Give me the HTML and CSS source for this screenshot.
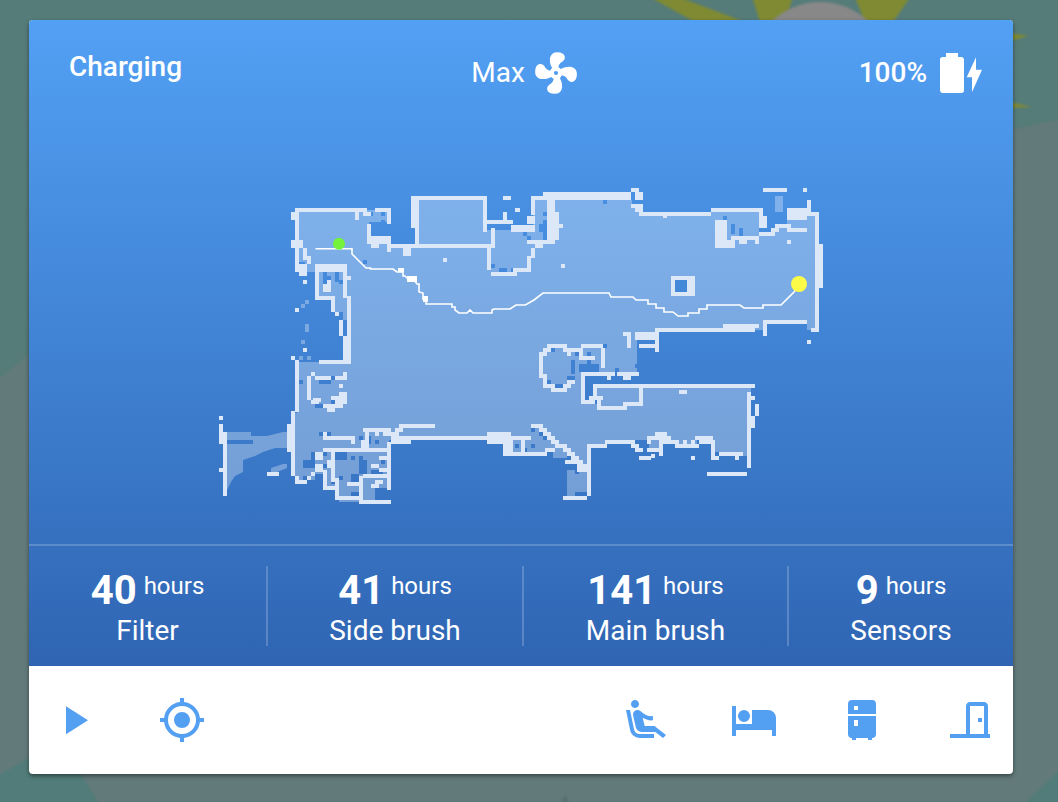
FILE: index.html
```html
<!DOCTYPE html>
<html lang="en">
<head>
<meta charset="utf-8">
<title>Vacuum</title>
<link rel="stylesheet" href="styles.css">
</head>
<body>
<svg class="wallpaper" viewBox="0 0 1058 802" aria-hidden="true">
  <path class="wp-gray" d="M-10,386L60,330L1020,128L1068,118V812H-10Z"/>
  <path class="wp-teal" d="M-10,780L60,740L105,812H-10ZM1068,762V812H1015Z"/>
  <path class="wp-sun" d="M637,-10H660L745,22H695ZM750,-10H795L785,22H760ZM852,-10H915L893,22H865ZM1010,33L1028,36L1010,41ZM1010,102L1032,107L1010,108Z"/>
  <circle class="wp-moon" cx="820" cy="72" r="70"/>
  <path class="wp-dark" d="M565,795L569,802H561Z"/>
</svg>
<main class="card">
  <section class="panel">
    <header class="status">
      <div class="state">Charging</div>
      <div class="fan">
        <span class="status-text">Max</span>
        <svg class="fan-icon" viewBox="0 0 24 24"><path d="M12,11A1,1 0 0,0 11,12A1,1 0 0,0 12,13A1,1 0 0,0 13,12A1,1 0 0,0 12,11M12.5,2C17,2 17.11,5.57 14.75,6.75C13.76,7.24 13.32,8.29 13.13,9.22C13.61,9.42 14.03,9.73 14.35,10.13C18.05,8.13 22.03,8.92 22.03,12.5C22.03,17 18.46,17.1 17.28,14.73C16.78,13.74 15.72,13.3 14.79,13.11C14.59,13.59 14.28,14 13.88,14.34C15.87,18.03 15.08,22 11.5,22C7,22 6.91,18.42 9.27,17.24C10.25,16.75 10.69,15.71 10.89,14.79C10.4,14.59 9.97,14.27 9.65,13.87C5.96,15.85 2,15.07 2,11.5C2,7 5.56,6.89 6.74,9.26C7.24,10.25 8.29,10.68 9.22,10.87C9.41,10.39 9.73,9.97 10.14,9.65C8.15,5.96 8.94,2 12.5,2Z"/></svg>
      </div>
      <div class="battery">
        <span class="status-text">100%</span>
        <svg class="battery-icon" viewBox="0 0 24 24"><path d="M16.67,4H15V2H9V4H7.33A1.33,1.33 0 0,0 6,5.33V20.67C6,21.4 6.6,22 7.33,22H16.67A1.33,1.33 0 0,0 18,20.67V5.33C18,4.6 17.4,4 16.67,4Z"/></svg>
        <svg class="bolt-icon" viewBox="0 0 17 36"><path d="M10,0.3L0.7,20.3H6V35.3L16,12.7H10Z"/></svg>
      </div>
    </header>
    <svg class="map" viewBox="29 100 984 444" role="img" aria-label="Floor map">
      <defs>
        <linearGradient id="mapbg" gradientUnits="userSpaceOnUse" x1="0" y1="20" x2="0" y2="666">
          <stop offset="0" stop-color="#52a0f4"/>
          <stop offset="1" stop-color="#2f65b3"/>
        </linearGradient>
      </defs>
      <path class="floor" d="M297,210H391V222H369V240H391V246H415V198H487V230H529V226H533V200H632V206H641V214H711V210H759V232H775V226H787V216H817V330H807V322H765V330H657V338H637V372H585V404H597V386H751V456H713V440H697V446H677V440H661V436H659V450H649V440H635V442H607V446H589V496H567V470H577V464H569V458H553V452H511V456H505V440H389V488H375V502H339V498H337V488H325V474H315V480H297V476H293V413H297V362H349V320H343V312H333V298H317V272H305V262H297Z
        M227,432H251V436H267L283,432H287V448H275L263,452L255,456L243,460V472L235,476L231,482L227,490Z
        M271,468L283,464H287V468L277,472H271Z
        M775,196H783V212H775Z
        M301,304h4v4h-4zM305,300h4v4h-4zM305,324h4v8h-4zM301,340h4v4h-4zM299,356h4v4h-4zM307,356h4v4h-4z"/>
      <path class="holes" d="M227,442H251
        M321,434h0M329,434h0M361,438h0M369,438V442M377,442h0M337,454H345M337,458H345M353,458h0M361,458h0M361,462V472M365,462V472M373,472H381M353,476V484M357,476V484M341,478h0M333,482h0M353,494H361M383,462h0M377,450h0M325,454h0M325,466h0M305,462H313M305,466H313M313,454V458M305,478h0
        M321,382H329M333,378h0M341,378h0M301,382h0M297,386h0M333,402h0M317,406H321
        M313,274H317M333,270h0M341,270h0M325,274V284M337,274V280M329,278h0M341,282h0
        M493,266h0M501,270H505M513,270h0M365,262h0M383,214h0M371,214h0M383,222h0
        M605,202h0M545,214h0M545,222H549M541,226H545M541,230H545M545,234V238M525,234h0M529,238h0
        M725,218h0M733,226V232M741,230V234
        M577,354h0M589,354V364M573,362V372M581,366H589M581,370H589M593,366H597M593,370H597M605,346h0M617,370V374M637,366h0M553,350h0M549,382h0M557,386H561M569,378H573
        M533,430h0M541,434h0M545,438h0M517,446h0M525,450h0M533,446h0M569,458h0M577,466V472M577,494H585M717,454h0M649,342h0"/>
      <path class="blocks" d="M291,212h4v8h-4zM291,240h12v8h-12zM367,236h20v8h-20zM371,244h8v4h-8zM403,248h8v8h-8zM411,196h8v32h-8zM415,228h4v16h-4zM443,258h4v4h-4z
        M503,196h8v4h-8zM503,212h4v8h-4zM515,208h5v4h-5zM511,225h24v7h-24zM527,216h8v8h-8zM531,196h4v19h-4zM543,192h88v8h-88zM535,196h8v4h-8zM547,200h8v40h-8zM555,212h4v28h-4zM559,224h4v4h-4zM527,240h28v4h-28zM535,244h8v4h-8z
        M631,188h8v4h-8zM635,192h8v8h-8zM631,204h12v4h-12zM635,208h8v4h-8zM663,214h4v4h-4z
        M759,208h4v8h-4zM759,216h8v12h-8zM715,220h12v28h-12zM727,240h8v8h-8zM731,236h28v4h-28zM739,240h8v4h-8zM755,240h4v4h-4zM759,232h16v4h-16zM771,228h8v4h-8zM775,224h16v4h-16zM787,228h20v4h-20zM787,208h20v12h-20zM807,212h12v4h-12zM807,200h4v12h-4zM763,188h24v4h-24zM803,188h4v4h-4zM787,240h4v4h-4zM819,244h4v44h-4zM811,328h8v4h-8zM807,340h4v4h-4z
        M723,324h36v4h-36zM623,332h8v4h-8zM627,336h4v12h-4zM635,332h24v8h-24zM655,328h4v24h-4zM639,344h16v4h-16z
        M671,276h24v20h-24z
        M623,376h8v4h-8zM607,376h4v4h-4zM679,390h8v4h-8zM751,416h4v12h-4zM755,404h4v12h-4zM751,396h4v4h-4zM707,472h40v4h-40zM719,452h24v4h-24zM711,456h8v4h-8zM735,456h4v4h-4zM651,454h4v4h-4zM639,456h12v4h-12zM691,456h4v4h-4zM683,440h4v4h-4zM691,440h4v4h-4z
        M565,460h12v4h-12zM577,464h10v8h-10z
        M391,436h20v8h-20zM487,432h24v12h-24zM503,444h8v12h-8zM395,428h8v4h-8zM365,428h4v12h-4zM361,440h8v8h-8zM383,432h16v4h-16zM375,432h4v4h-4z
        M287,424h8v28h-8zM295,480h12v4h-12zM295,476h4v4h-4zM315,452h8v8h-8zM315,464h8v8h-8zM311,472h4v4h-4zM307,476h4v4h-4zM323,470h4v4h-4zM327,460h4v8h-4z
        M371,464h8v4h-8zM379,468h8v4h-8zM379,456h8v4h-8zM375,480h8v4h-8zM371,484h8v4h-8z
        M219,432h4v12h-4zM219,468h8v4h-8zM223,492h4v4h-4zM219,416h4v4h-4zM219,424h4v8h-4zM267,472h12v4h-12z
        M311,372h4v4h-4zM313,398h8v4h-8zM331,396h16v4h-16zM339,392h8v8h-8zM335,400h12v4h-12zM323,404h20v4h-20zM327,408h8v4h-8zM339,384h4v4h-4zM343,372h4v8h-4z
        M303,280h4v4h-4zM295,308h4v4h-4zM303,348h4v4h-4zM291,356h4v4h-4z
        M347,276h4v4h-4zM343,336h4v24h-4zM335,312h4v4h-4zM323,284h8v8h-8zM327,280h4v4h-4z
        M295,264h12v8h-12zM299,272h8v4h-8zM307,256h4v8h-4zM315,264h32v8h-32z
        M561,264h4v4h-4z"/>
      <rect class="pit" x="675" y="280" width="12" height="12"/>
      <path class="walls" d="M297,210H365M357,214V218M365,214H369M377,210H389V222M369,226V242M389,238V250M389,246H491M413,198H485V230M493,230V246M489,250V268M493,274H515V270H529V258M533,250V256M489,222H511
        M641,214H709M713,210H761M817,214V330M765,322H805M765,322V334M657,330H753M629,338V346M657,330V350
        M569,354V350H565V346H549V350H545V354H541V376H545V386H553V390H565V386H569V382H573M583,346H601M573,350H581M603,350V366M585,358H593M581,354V358
        M583,374H613M619,374H637M583,374V402H593M591,398H601M595,386V398M595,386H753M599,402V408H625V404H641V390M749,394V466
        M713,444V456M697,438H711M701,442H713M677,446H697M665,442H677M665,438H669M657,434H665M661,434V454M649,450H661M649,438H657M649,438V442M637,450H641M633,446H637M607,442H633M589,446H605M589,448V494
        M533,426H541V430H545V434H549V438H553V442H557V446H565V450H569V454H573V458H577V462H581V466H585V470H589M565,498H585
        M511,454H545M547,450H553M511,438H529M511,438V450M523,438V450
        M413,438H485M505,454H520M401,426H433M365,430H389M325,438H353V442M325,434h0M325,450H389M389,444V488
        M293,413V474M297,362V410M333,452V480H337V498H361M361,478V500M361,502H389M349,484H361M365,476H387M325,472V488H337
        M225,434V490
        M309,378V398M313,402H317M317,378H329M337,378H345M313,374h0M341,386h0
        M345,266V296M349,298V362M341,322V334M333,298V310M317,298H333M317,272V298M321,362H349
        M297,210V262M305,250V258"/>
      <path class="route" d="M315.5,248.7H352V254L357,259L362,264L366,268H370.5V269H393L397,272H403V276H405L409,280H414L417,284H419V292L423,293V299H426V304H452V307H455V310L459,313H467L470,310L473,313H492V310L494,309H510L516,305H525L527,304L534,300L543,293H609L611,297H633L636,300H648V304H656V308H664V312H673L678,316H688V313H699V309H707V305H740L744,308H763V305H781L794,292L799,285"/>
      <path class="route-blocks" d="M398,268h6v4h-6zM407,276h10v6h-10zM423,296h5v6h-5z"/>
      <circle class="dock" cx="339" cy="243.7" r="6"/>
      <circle class="robot" cx="799" cy="284" r="8"/>
    </svg>
    <div class="stats">
      <div class="stat"><div class="stat-value"><b>40</b><span>hours</span></div><div class="stat-label">Filter</div></div>
      <div class="stat"><div class="stat-value"><b>41</b><span>hours</span></div><div class="stat-label">Side brush</div></div>
      <div class="stat"><div class="stat-value"><b>141</b><span>hours</span></div><div class="stat-label">Main brush</div></div>
      <div class="stat"><div class="stat-value"><b>9</b><span>hours</span></div><div class="stat-label">Sensors</div></div>
    </div>
  </section>
  <nav class="actions">
    <div class="group">
      <svg class="icon" viewBox="0 0 24 24"><path d="M8,5.14V19.14L19,12.14L8,5.14Z"/></svg>
      <svg class="icon" viewBox="0 0 24 24"><path d="M12,8A4,4 0 0,1 16,12A4,4 0 0,1 12,16A4,4 0 0,1 8,12A4,4 0 0,1 12,8M3.05,13H1V11H3.05C3.5,6.83 6.83,3.5 11,3.05V1H13V3.05C17.17,3.5 20.5,6.83 20.95,11H23V13H20.95C20.5,17.17 17.17,20.5 13,20.95V23H11V20.95C6.83,20.5 3.5,17.17 3.05,13M12,5A7,7 0 0,0 5,12A7,7 0 0,0 12,19A7,7 0 0,0 19,12A7,7 0 0,0 12,5Z"/></svg>
    </div>
    <div class="group">
      <svg class="icon" viewBox="0 0 24 24"><path d="M5.35,5.64C4.45,5 4.23,3.76 4.86,2.85C5.5,1.95 6.74,1.73 7.65,2.36C8.55,3 8.77,4.24 8.14,5.15C7.5,6.05 6.26,6.27 5.35,5.64M16,19H8.93C7.45,19 6.19,17.92 5.97,16.46L4,7H2L4,16.76C4.37,19.2 6.47,21 8.94,21H16M16.23,15H11.35L10.32,10.9C11.9,11.79 13.6,12.44 15.47,12.12V10C13.84,10.3 12.03,9.72 10.78,8.74L9.14,7.47C8.91,7.29 8.65,7.17 8.38,7.09C8.06,7 7.72,6.97 7.39,7.03H7.37C6.14,7.25 5.32,8.42 5.53,9.64L6.88,15.56C7.16,17 8.39,18 9.83,18H16.68L20.5,21L22,19.5"/></svg>
      <svg class="icon" viewBox="0 0 24 24"><path d="M19,7H11V14H3V5H1V20H3V17H21V20H23V11A4,4 0 0,0 19,7M7,13A3,3 0 0,0 10,10A3,3 0 0,0 7,7A3,3 0 0,0 4,10A3,3 0 0,0 7,13Z"/></svg>
      <svg class="icon" viewBox="0 0 24 24"><path d="M7,2H17A2,2 0 0,1 19,4V9H5V4A2,2 0 0,1 7,2M19,19A2,2 0 0,1 17,21V22H15V21H9V22H7V21A2,2 0 0,1 5,19V10H19V19M8,5V7H10V5H8M8,12V15H10V12H8Z"/></svg>
      <svg class="icon door" viewBox="0 0 24 24"><path d="M2,19H10V5C10,3.9 10.9,3 12,3H19C20.1,3 21,3.9 21,5V19H22V21H2V19M12,5V19H19V5H12M16,11H18V13H16V11Z"/></svg>
    </div>
  </nav>
</main>
</body>
</html>
```

FILE: styles.css
```css
* { box-sizing: border-box; }
html, body { margin: 0; height: 100%; }
body {
  background: #567c79;
  font-family: Roboto, "Liberation Sans", sans-serif;
  color: #fff;
  overflow: hidden;
  padding: 20px 0 0 29px;
}
.wallpaper { position: absolute; inset: 0; width: 1058px; height: 802px; z-index: -1; overflow: visible; filter: blur(1px); }
.wp-gray { fill: #637a7a; }
.wp-teal { fill: #527c79; }
.wp-sun { fill: #7f8a33; }
.wp-moon { fill: #888; }
.wp-dark { fill: #576f6f; }

.card {
  width: 984px;
  height: 754px;
  border-radius: 4px;
  overflow: hidden;
  background: #fff;
  box-shadow: 0 2px 4px rgba(0, 0, 0, .45);
  display: flex;
  flex-direction: column;
}
.panel {
  height: 646px;
  flex: none;
  display: flex;
  flex-direction: column;
  background: linear-gradient(#52a0f4, #2f65b3);
}
.status {
  height: 80px;
  flex: none;
  padding: 29px 30px 0 40px;
  display: grid;
  grid-template-columns: 1fr auto 1fr;
  align-items: start;
  font-size: 28px;
}
.state { font-weight: 500; line-height: 36px; }
.status-text { margin-bottom: 2px; }
.fan { display: flex; align-items: center; gap: 6px; height: 48px; }
.fan-icon { width: 50px; height: 50px; fill: #fff; }
.battery { display: flex; justify-content: flex-end; align-items: center; height: 48px; font-weight: 500; }
.battery-icon { width: 48px; height: 48px; fill: #fff; margin-left: 1px; }
.bolt-icon { width: 17px; height: 36px; fill: #fff; margin-left: -10px; margin-top: 4px; }

.map { display: block; width: 984px; height: 444px; flex: none; }
.floor { fill: rgba(255, 255, 255, .3); }
.holes { fill: none; stroke: url(#mapbg); stroke-width: 4; stroke-linecap: square; shape-rendering: crispEdges; }
.blocks { fill: #dce8f7; shape-rendering: crispEdges; }
.pit { fill: url(#mapbg); shape-rendering: crispEdges; }
.walls { fill: none; stroke: #dce8f7; stroke-width: 4; stroke-linecap: square; shape-rendering: crispEdges; }
.route { fill: none; stroke: #fff; stroke-width: 1.6; }
.route-blocks { fill: #fff; }
.dock { fill: #74f23c; }
.robot { fill: #fbfb48; }

.stats {
  height: 122px;
  flex: none;
  border-top: 2px solid rgba(255, 255, 255, .2);
  padding: 20px 0;
  display: grid;
  grid-template-columns: 237px 256px 265px 226px;
}
.stat { text-align: center; border-left: 2px solid rgba(255, 255, 255, .2); }
.stat:first-child { border-left: 0; }
.stat-value { line-height: 40px; height: 50px; white-space: nowrap; }
.stat-value b { font-size: 40px; font-weight: 700; }
.stat-value span { font-size: 24px; margin-left: 7px; vertical-align: 10px; }
.stat-label { font-size: 28px; line-height: 30px; }

.actions {
  flex: 1;
  display: flex;
  justify-content: space-between;
  align-items: center;
  padding: 0 19px 0 21px;
}
.group { display: flex; gap: 60px; }
.icon { width: 48px; height: 48px; fill: #539ff2; display: block; }
.door { fill-rule: evenodd; }
```
